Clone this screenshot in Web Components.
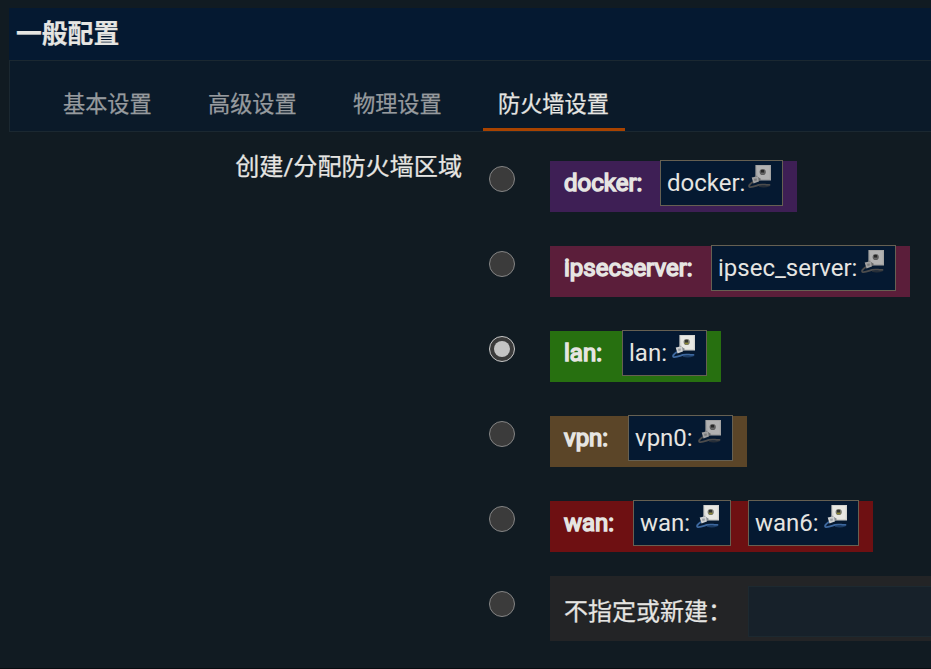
<!DOCTYPE html>
<html lang="zh-CN">
<head>
<meta charset="utf-8">
<title>一般配置</title>
<style>
html,body{margin:0;height:669px;overflow:hidden;background:#111b22}
body{color:#e6e5e2;font:24px/28px Roboto,"Noto Sans CJK SC",sans-serif}
</style>
</head>
<body>
<config-page>
  <config-tabs slot="tabs">
    <config-tab>基本设置</config-tab><config-tab>高级设置</config-tab><config-tab>物理设置</config-tab><config-tab active>防火墙设置</config-tab>
  </config-tabs>
  <zone-row style="--c:#3e1f55;--w:247px;--l:96px" name="docker:"><net-badge off style="--w:123px">docker:</net-badge></zone-row>
  <zone-row style="--c:#5b1e3a;--w:360px;--l:147px" name="ipsecserver:"><net-badge off style="--w:185px">ipsec_server:</net-badge></zone-row>
  <zone-row checked style="--c:#277010;--w:171px;--l:58px" name="lan:"><net-badge style="--w:85px">lan:</net-badge></zone-row>
  <zone-row style="--c:#5b4528;--w:197px;--l:64px" name="vpn:"><net-badge off style="--w:105px">vpn0:</net-badge></zone-row>
  <zone-row style="--c:#6e1012;--w:323px;--l:69px" name="wan:"><net-badge style="--w:98px">wan:</net-badge><net-badge style="--w:111px">wan6:</net-badge></zone-row>
  <new-zone-row>不指定或新建：</new-zone-row>
</config-page>
<script>
function define(name, markup, setup) {
  const template = document.createElement('template');
  template.innerHTML = markup;
  customElements.define(name, class extends HTMLElement {
    constructor() {
      super();
      this.attachShadow({ mode: 'open' }).append(template.content.cloneNode(true));
    }
    connectedCallback() { if (setup) setup(this); }
  });
}

define('config-page', `<style>
:host{display:block;box-sizing:border-box;height:669px;padding:8px 0 0 9px;border-bottom:1px solid #080d11;overflow:hidden}
h1{margin:0;box-sizing:border-box;height:52px;padding:8px 0 0 7px;background:#051931;font-size:25.8px;line-height:36px;font-weight:700;-webkit-text-stroke:.2px currentColor}
.form{display:grid;grid-template-columns:453px 1fr;column-gap:26px}
.label{padding-top:21px;text-align:right;font-size:24.1px;line-height:28px;white-space:nowrap;-webkit-text-stroke:.25px currentColor}
.zones{padding-top:28px}
</style>
<h1>一般配置</h1>
<slot name="tabs"></slot>
<div class="form"><div class="label">创建/分配防火墙区域</div><div class="zones"><slot></slot></div></div>`);

define('config-tabs', `<style>
:host{display:flex;box-sizing:border-box;height:72px;gap:3px;padding-left:38px;background:#0b1a29;border:1px solid #1b2831;border-right:0}
</style><slot></slot>`);

define('config-tab', `<style>
:host{display:block;box-sizing:border-box;flex:none;width:142px;height:70px;padding:27px 0 0 15px;color:#969a9e;font-size:22.2px;line-height:32px;white-space:nowrap;border-bottom:3px solid transparent;-webkit-text-stroke:.25px currentColor}
:host([active]){color:#e6e5e2;border-color:#a84300}
</style><slot></slot>`);

define('radio-dot', `<style>
:host{display:grid;place-items:center;box-sizing:border-box;flex:none;width:26px;height:26px;border:1.4px solid #858585;border-radius:50%;background:#3b3b3b}
:host([checked]){border:1.5px solid #c8c8c8}
:host([checked])::after{content:"";width:16px;height:16px;border-radius:50%;background:#c4c4c4}
</style>`);

define('zone-row', `<style>
:host{display:flex;height:85px}
radio-dot{margin:6px 35px 0 1px}
.zone{display:flex;box-sizing:border-box;width:var(--w);height:51px;margin-top:1px;padding-left:14px;background:var(--c);white-space:nowrap}
.name{width:var(--l);flex:none;line-height:44px;-webkit-text-stroke:1.5px currentColor}
.nets{display:flex;gap:17px;margin-top:-1px}
</style><radio-dot></radio-dot><div class="zone"><span class="name"></span><div class="nets"><slot></slot></div></div>`, el => {
  el.shadowRoot.querySelector('.name').textContent = el.getAttribute('name');
  el.shadowRoot.querySelector('radio-dot').toggleAttribute('checked', el.hasAttribute('checked'));
});

define('net-badge', `<style>
:host{display:flex;justify-content:space-between;box-sizing:border-box;flex:none;width:var(--w);height:46px;padding:0 10px 0 6px;border:1px solid #666052;background:#051931;line-height:44px}
svg{width:24px;height:24px;margin-top:3px;flex:none}
:host([off]) svg{filter:grayscale(1) brightness(.77)}
</style><slot></slot>
<svg viewBox="0 0 24 24">
<path d="M4.5 18.3C2 20 .2 22 1.5 22.9 3.5 23.8 7.500 22 11 20.900S18 21.300 21.500 20.800" fill="none" stroke="#3d689f" stroke-width="1.8" stroke-linecap="round"/>
<path d="M11 22C15 23.300 18 23 21.500 21.500" fill="none" stroke="#2c5487" stroke-width="1.4" opacity=".6"/>
<path d="M7.400 1H23v15.400H10.500L7.400 13z" fill="#d4d4d0"/>
<path d="M8.500 2h13.200v13H10z" fill="#e8e8e3"/>
<circle cx="14.700" cy="8" r="3.100" fill="#77786e"/>
<path d="M13 6h3v2.700h-3z" fill="#34352f"/><path d="M12.800 8.700h3.600v1.500h-3.600z" fill="#8e8b34"/>
<path d="M8 11.500l5 3.500-2.500 2.500-4.500-4z" fill="#858a8e"/>
<path d="M3.700 13.500l6.300-1.300.8 5.200-5.300 2.100z" fill="#d0d2d3"/>
<path d="M6 14.800l2.700-.4.200 2-2.400.7z" fill="#9ba1a5"/>
</svg>`);

define('new-zone-row', `<style>
:host{display:flex;height:80px}
radio-dot{margin:6px 35px 0 1px}
.zone{display:flex;box-sizing:border-box;flex:1;height:65px;margin-top:-9px;padding:10px 0 0 14px;background:#232426;white-space:nowrap}
.name{width:184px;flex:none;line-height:52px;-webkit-text-stroke:.25px currentColor}
.field{box-sizing:border-box;flex:1;height:51px;border:1px solid #1d2930;border-right:0;background:#17212a}
</style><radio-dot></radio-dot><div class="zone"><span class="name"><slot></slot></span><div class="field"></div></div>`);
</script>
</body>
</html>
